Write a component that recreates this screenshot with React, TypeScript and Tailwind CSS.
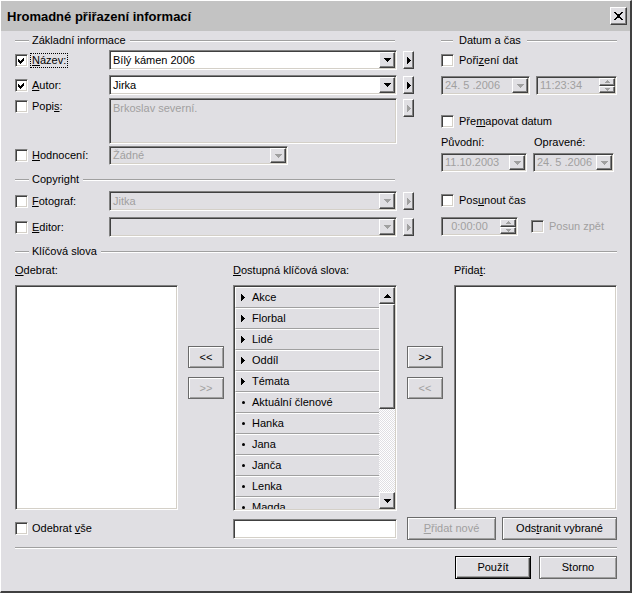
import React from 'react';

const sunken =
  'border border-t-[#808080] border-l-[#808080] border-r-white border-b-white shadow-[inset_1px_1px_#404040,inset_-1px_-1px_#d4d0c8]';
const raised =
  'border border-t-white border-l-white border-r-[#404040] border-b-[#404040] shadow-[inset_-1px_-1px_#808080]';

function Down({ gray = false }: { gray?: boolean }) {
  return (
    <svg width="7" height="4" viewBox="0 0 7 4" shapeRendering="crispEdges">
      <path d="M0 0H7V1H6V2H5V3H4V4H3V3H2V2H1V1H0Z" fill={gray ? '#a0a0a0' : '#000'} />
    </svg>
  );
}

function Up({ gray = false }: { gray?: boolean }) {
  return (
    <svg width="7" height="4" viewBox="0 0 7 4" shapeRendering="crispEdges">
      <path d="M0 4H7V3H6V2H5V1H4V0H3V1H2V2H1V3H0Z" fill={gray ? '#a0a0a0' : '#000'} />
    </svg>
  );
}

function Right({ gray = false }: { gray?: boolean }) {
  return (
    <svg width="4" height="7" viewBox="0 0 4 7" shapeRendering="crispEdges">
      <path d="M0 0V7H1V6H2V5H3V4H4V3H3V2H2V1H1V0Z" fill={gray ? '#a0a0a0' : '#000'} />
    </svg>
  );
}

function Check({ checked = false, disabled = false }: { checked?: boolean; disabled?: boolean }) {
  return (
    <span
      className={`${sunken} w-[13px] h-[13px] shrink-0 flex items-center justify-center ${
        disabled ? 'bg-[#e0dfe3]' : 'bg-white'
      }`}
    >
      {checked && (
        <svg width="7" height="7" viewBox="0 0 7 7" shapeRendering="crispEdges">
          <path d="M0 2L2 4L6 0V3L2 7L0 5Z" fill="#000" />
        </svg>
      )}
    </span>
  );
}

function GroupHeader({ title, className = '' }: { title: string; className?: string }) {
  return (
    <div className={`flex items-center h-[13px] ${className}`}>
      <div className="w-[14px] h-[2px] border-t border-t-[#a0a0a0] border-b border-b-white" />
      <span className="ml-[3px] mr-[4px]">{title}</span>
      <div className="flex-1 h-[2px] border-t border-t-[#a0a0a0] border-b border-b-white" />
    </div>
  );
}

function Combo({
  value,
  disabled = false,
  className = '',
}: {
  value: string;
  disabled?: boolean;
  className?: string;
}) {
  return (
    <div
      className={`${sunken} p-[1px] flex items-stretch ${disabled ? 'bg-[#e0dfe3]' : 'bg-white'} ${className}`}
    >
      <span className={`flex-1 flex items-center pl-[2px] whitespace-nowrap ${disabled ? 'text-[#a0a0a0]' : ''}`}>
        {value}
      </span>
      <span className={`${raised} bg-[#e0dfe3] w-[16px] flex items-center justify-center`}>
        <Down gray={disabled} />
      </span>
    </div>
  );
}

function Spinner({ value, className = '', center = false }: { value: string; className?: string; center?: boolean }) {
  return (
    <div className={`${sunken} p-[1px] flex items-stretch bg-[#e0dfe3] ${className}`}>
      <span className={`flex-1 flex items-center text-[#a0a0a0] ${center ? 'justify-center pr-[4px]' : 'pl-[2px]'}`}>
        {value}
      </span>
      <span className="w-[16px] flex flex-col">
        <span className={`${raised} flex-1 flex items-center justify-center`}>
          <svg width="5" height="3" viewBox="0 0 5 3" shapeRendering="crispEdges">
            <path d="M0 3H5V2H4V1H3V0H2V1H1V2H0Z" fill="#a0a0a0" />
          </svg>
        </span>
        <span className={`${raised} flex-1 flex items-center justify-center`}>
          <svg width="5" height="3" viewBox="0 0 5 3" shapeRendering="crispEdges">
            <path d="M0 0H5V1H4V2H3V3H2V2H1V1H0Z" fill="#a0a0a0" />
          </svg>
        </span>
      </span>
    </div>
  );
}

function SideBtn({ disabled = false, className = '' }: { disabled?: boolean; className?: string }) {
  return (
    <span className={`${raised} w-[11px] h-[18px] shrink-0 flex items-center justify-center ${className}`}>
      <Right gray={disabled} />
    </span>
  );
}

function Btn({
  children,
  className = '',
  disabled = false,
  def = false,
}: {
  children: React.ReactNode;
  className?: string;
  disabled?: boolean;
  def?: boolean;
}) {
  return (
    <div
      className={`flex items-center justify-center border ${
        def ? 'border-black shadow-[inset_1px_1px_#fff,inset_-1px_-1px_#404040,inset_-2px_-2px_#a0a0a0]' : 'border-[#6a6a6a] shadow-[inset_1px_1px_#fff,inset_-1px_-1px_#a0a0a0]'
      } ${disabled ? 'text-[#a0a0a0]' : ''} ${className}`}
    >
      {children}
    </div>
  );
}

const keywords: { name: string; group: boolean }[] = [
  { name: 'Akce', group: true },
  { name: 'Florbal', group: true },
  { name: 'Lidé', group: true },
  { name: 'Oddíl', group: true },
  { name: 'Témata', group: true },
  { name: 'Aktuální členové', group: false },
  { name: 'Hanka', group: false },
  { name: 'Jana', group: false },
  { name: 'Janča', group: false },
  { name: 'Lenka', group: false },
  { name: 'Magda', group: false },
];

export default function App() {
  return (
    <div className="w-[632px] h-[593px] bg-[#e0dfe3] border-l border-t border-l-white border-t-white border-r-2 border-b-2 border-r-[#404040] border-b-[#404040] flex flex-col font-['Liberation_Sans',Arial,sans-serif] text-[11px] text-black leading-none select-none overflow-hidden">
      {/* title bar */}
      <div className="h-[30px] shrink-0 bg-[#c3c3c3] flex items-center justify-between pl-[6px] pr-[3px]">
        <span className="text-[13px] font-bold">Hromadné přiřazení informací</span>
        <span className={`${raised} bg-[#e0dfe3] w-[17px] h-[18px] flex items-center justify-center`}>
          <svg width="9" height="8" viewBox="0 0 9 8" shapeRendering="crispEdges">
            <path
              d="M0 0H2V1H3V2H6V1H7V0H9V1H8V2H7V3H6V5H7V6H8V7H9V8H7V7H6V6H3V7H2V8H0V7H1V6H2V5H3V3H2V2H1V1H0Z"
              fill="#000"
            />
          </svg>
        </span>
      </div>

      <div className="flex-1 pl-[14px] pr-[13px] flex flex-col">
        {/* top section */}
        <div className="flex gap-[27px] pt-[3px]">
          {/* left column */}
          <div className="w-[399px] flex flex-col">
            <GroupHeader title="Základní informace" className="mr-[19px]" />

            <div className="flex items-center h-[20px] mt-[3px]">
              <Check checked />
              <span className="ml-[4px] w-[77px] flex">
                <span className="outline outline-1 outline-dotted outline-black outline-offset-1">
                  <u>N</u>ázev:
                </span>
              </span>
              <Combo value="Bílý kámen 2006" className="w-[288px] h-[20px]" />
              <SideBtn className="ml-[6px]" />
            </div>

            <div className="flex items-center h-[20px] mt-[5px]">
              <Check checked />
              <span className="ml-[4px] w-[77px]">
                <u>A</u>utor:
              </span>
              <Combo value="Jirka" className="w-[288px] h-[20px]" />
              <SideBtn className="ml-[6px]" />
            </div>

            <div className="flex items-start h-[46px] mt-[3px]">
              <span className="mt-[2px]">
                <Check />
              </span>
              <span className="ml-[4px] w-[77px] h-[13px] mt-[2px] flex items-center">
                Popi<u>s</u>:
              </span>
              <div className={`${sunken} w-[288px] h-[46px] bg-[#e0dfe3] pl-[3px] pt-[4px] text-[#a0a0a0]`}>
                Brkoslav severní.
              </div>
              <SideBtn disabled className="ml-[6px] mt-[1px]" />
            </div>

            <div className="flex items-center h-[19px] mt-[2px]">
              <Check />
              <span className="ml-[4px] w-[77px]">
                <u>H</u>odnocení:
              </span>
              <Combo value="Žádné" disabled className="w-[179px] h-[19px]" />
            </div>

            <GroupHeader title="Copyright" className="mr-[19px] mt-[8px]" />

            <div className="flex items-center h-[20px] mt-[5px]">
              <Check />
              <span className="ml-[4px] w-[77px]">
                <u>F</u>otograf:
              </span>
              <Combo value="Jitka" disabled className="w-[288px] h-[20px]" />
              <SideBtn disabled className="ml-[6px]" />
            </div>

            <div className="flex items-center h-[20px] mt-[6px]">
              <Check />
              <span className="ml-[4px] w-[77px]">
                <u>E</u>ditor:
              </span>
              <Combo value="" disabled className="w-[288px] h-[20px]" />
              <SideBtn disabled className="ml-[6px]" />
            </div>
          </div>

          {/* right column */}
          <div className="w-[176px] flex flex-col">
            <div className="flex items-center h-[13px]">
              <div className="w-[12px] h-[2px] border-t border-t-[#a0a0a0] border-b border-b-white" />
              <span className="ml-[6px] mr-[6px]">Datum a čas</span>
              <div className="flex-1 h-[2px] border-t border-t-[#a0a0a0] border-b border-b-white" />
            </div>

            <div className="flex items-center h-[20px] mt-[3px]">
              <Check />
              <span className="ml-[5px]">
                Poři<u>z</u>ení dat
              </span>
            </div>

            <div className="flex items-center h-[19px] mt-[6px]">
              <Combo value="24. 5 .2006" disabled className="w-[89px] h-[19px]" />
              <Spinner value="11:23:34" className="w-[81px] h-[19px] ml-[6px]" />
            </div>

            <div className="flex items-center h-[20px] mt-[16px]">
              <Check />
              <span className="ml-[5px]">
                Pře<u>m</u>apovat datum
              </span>
            </div>

            <div className="flex items-center h-[13px] mt-[5px]">
              <span className="w-[93px]">Původní:</span>
              <span>Opravené:</span>
            </div>

            <div className="flex items-center h-[19px] mt-[4px]">
              <Combo value="11.10.2003" disabled className="w-[86px] h-[19px]" />
              <Combo value="24. 5 .2006" disabled className="w-[81px] h-[19px] ml-[6px]" />
            </div>

            <div className="flex items-center h-[20px] mt-[18px]">
              <Check />
              <span className="ml-[5px]">
                Pos<u>u</u>nout čas
              </span>
            </div>

            <div className="flex items-center h-[19px] mt-[7px]">
              <Spinner value="0:00:00" center className="w-[77px] h-[19px]" />
              <span className="ml-[13px]">
                <Check disabled />
              </span>
              <span className="ml-[5px] text-[#a0a0a0]">Posun zpět</span>
            </div>
          </div>
        </div>

        {/* keywords */}
        <GroupHeader title="Klíčová slova" className="mt-[8px]" />

        <div className="flex items-center h-[13px] mt-[6px]">
          <span className="w-[218px]">
            <u>O</u>debrat:
          </span>
          <span className="w-[221px]">
            <u>D</u>ostupná klíčová slova:
          </span>
          <span>
            Přida<u>t</u>:
          </span>
        </div>

        <div className="flex h-[226px] mt-[8px]">
          <div className={`${sunken} w-[163px] h-[225px] bg-white`} />

          <div className="ml-[10px] w-[36px] flex flex-col gap-[9px] pt-[61px]">
            <Btn className="h-[22px]">&lt;&lt;</Btn>
            <Btn disabled className="h-[22px]">
              &gt;&gt;
            </Btn>
          </div>

          <div className={`${sunken} ml-[9px] w-[164px] h-full p-[1px] flex bg-[#e0dfe3]`}>
            <div className="flex-1 overflow-hidden flex flex-col">
              {keywords.map((k) => (
                <div
                  key={k.name}
                  className="h-[21px] shrink-0 flex items-center border-t border-t-white border-b border-b-[#a0a0a0] border-l border-l-white pl-[5px]"
                >
                  <span className="w-[10px] flex items-center">
                    {k.group ? <Right /> : <span className="w-[3px] h-[3px] rounded-full bg-black ml-[1px]" />}
                  </span>
                  <span className="ml-[1px]">{k.name}</span>
                </div>
              ))}
            </div>
            <div className="w-[16px] flex flex-col">
              <span className={`${raised} h-[17px] shrink-0 flex items-center justify-center`}>
                <Up />
              </span>
              <span className={`${raised} h-[105px] shrink-0`} />
              <span className="flex-1 bg-[repeating-conic-gradient(#ffffff_0_25%,#e0dfe3_0_50%)] bg-[length:2px_2px]" />
              <span className={`${raised} h-[17px] shrink-0 flex items-center justify-center`}>
                <Down />
              </span>
            </div>
          </div>

          <div className="ml-[10px] w-[36px] flex flex-col gap-[9px] pt-[61px]">
            <Btn className="h-[22px]">&gt;&gt;</Btn>
            <Btn disabled className="h-[22px]">
              &lt;&lt;
            </Btn>
          </div>

          <div className={`${sunken} ml-[11px] w-[163px] h-[225px] bg-white`} />
        </div>

        <div className="flex items-center h-[23px] mt-[6px]">
          <div className="w-[218px] flex items-center">
            <Check />
            <span className="ml-[4px]">
              Odebrat <u>v</u>še
            </span>
          </div>
          <div className={`${sunken} w-[164px] h-[20px] bg-white`} />
          <Btn disabled className="ml-[10px] w-[89px] h-[23px]">
            <span>
              <u>P</u>řidat nové
            </span>
          </Btn>
          <Btn className="ml-[6px] w-[115px] h-[23px]">
            <span>
              Ods<u>t</u>ranit vybrané
            </span>
          </Btn>
        </div>

        <div className="h-[2px] mt-[7px] border-t border-t-[#a0a0a0] border-b border-b-white" />

        <div className="flex justify-end items-center h-[23px] mt-[7px]">
          <Btn def className="w-[76px] h-[23px]">
            Použít
          </Btn>
          <Btn className="ml-[8px] w-[78px] h-[23px]">Storno</Btn>
        </div>
      </div>
    </div>
  );
}
